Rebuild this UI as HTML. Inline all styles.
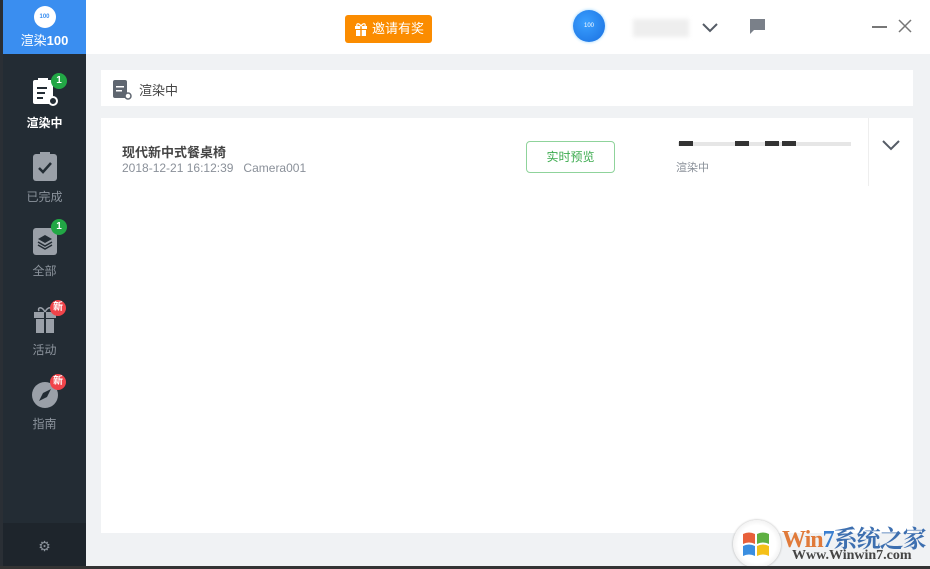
<!DOCTYPE html>
<html><head><meta charset="utf-8"><style>
*{margin:0;padding:0;box-sizing:border-box}
body{width:930px;height:569px;overflow:hidden;background:#f0f2f4;font-family:"Liberation Sans","Noto Sans CJK SC",sans-serif;position:relative}
.abs{position:absolute}
.side{left:0;top:0;width:86px;height:569px;background:#232c34;border-left:3px solid #2a2f35}
.logo{left:3px;top:0;width:83px;height:54px;background:#3a8ef0;color:#fff;text-align:center}
.nav{left:3px;width:83px;text-align:center;font-size:12px;color:#8b939c}
.badge{position:absolute;width:16px;height:16px;border-radius:50%;color:#fff;font-size:10px;line-height:16px;text-align:center;font-weight:bold}
.g{background:#22a745}.r{background:#f0444a}
</style></head><body>
<div class="abs side"></div>
<div class="abs logo">
 <div style="width:22px;height:22px;border-radius:50%;background:#fff;margin:6px auto 0;font-size:6px;color:#3a8ef0;line-height:22px;font-weight:bold">100</div>
 <div style="font-size:13px;margin-top:2px">渲染<b>100</b></div>
</div>
<div class="abs nav" style="top:76px;color:#fff;font-weight:bold">
 <svg width="30" height="32" viewBox="0 0 30 32" style="display:block;margin:0 auto"><rect x="3" y="4" width="20" height="24" rx="2" fill="#fff"/><rect x="8" y="2" width="10" height="4" fill="#fff"/><rect x="7" y="11" width="10" height="2" fill="#232c34"/><rect x="7" y="16" width="8" height="2" fill="#232c34"/><rect x="7" y="21" width="6" height="2" fill="#232c34"/><circle cx="23" cy="25" r="4" fill="#232c34" stroke="#fff" stroke-width="2"/></svg>
 <div style="margin-top:6px">渲染中</div>
 <div class="badge g" style="left:48px;top:-3px">1</div>
</div>
<div class="abs nav" style="top:151px">
 <svg width="30" height="32" viewBox="0 0 30 32" style="display:block;margin:0 auto"><rect x="3" y="3" width="24" height="27" rx="3" fill="#9aa0a8"/><rect x="10" y="1" width="10" height="4" fill="#9aa0a8"/><path d="M9 17l4 4 8-9" stroke="#232c34" stroke-width="2.5" fill="none"/></svg>
 <div style="margin-top:5px">已完成</div>
</div>
<div class="abs nav" style="top:225px">
 <svg width="30" height="32" viewBox="0 0 30 32" style="display:block;margin:0 auto"><rect x="3" y="3" width="24" height="27" rx="3" fill="#9aa0a8"/><path d="M8 14l7-4 7 4-7 4z" fill="#232c34"/><path d="M8 17l7 4 7-4M8 20l7 4 7-4" stroke="#232c34" stroke-width="1.5" fill="none"/></svg>
 <div style="margin-top:5px">全部</div>
 <div class="badge g" style="left:48px;top:-6px">1</div>
</div>
<div class="abs nav" style="top:304px">
 <svg width="30" height="32" viewBox="0 0 30 32" style="display:block;margin:0 auto"><rect x="4" y="8" width="22" height="6" fill="#9aa0a8"/><rect x="6" y="15" width="18" height="14" fill="#9aa0a8"/><rect x="14" y="8" width="2" height="21" fill="#232c34"/><path d="M15 8c-3-6-8-5-6-1M15 8c3-6 8-5 6-1" stroke="#9aa0a8" stroke-width="1.5" fill="none"/></svg>
 <div style="margin-top:5px">活动</div>
 <div class="badge r" style="left:47px;top:-4px">新</div>
</div>
<div class="abs nav" style="top:380px">
 <svg width="30" height="30" viewBox="0 0 30 30" style="display:block;margin:0 auto"><circle cx="15" cy="15" r="13" fill="#9aa0a8"/><path d="M21 9l-4 8-8 4 4-8z" fill="#232c34"/></svg>
 <div style="margin-top:5px">指南</div>
 <div class="badge r" style="left:47px;top:-6px">新</div>
</div>
<div class="abs" style="left:3px;top:523px;width:83px;height:46px;background:#1e252c;color:#8b939c;text-align:center;line-height:46px;font-size:14px">⚙</div>
<div class="abs" style="left:86px;top:0;width:844px;height:54px;background:#fff"></div>
<div class="abs" style="left:345px;top:15px;width:87px;height:28px;background:#fb8c00;border-radius:3px;color:#fff;font-size:13px;line-height:28px;padding-left:27px">邀请有奖</div>
<svg class="abs" style="left:354px;top:22px" width="14" height="14" viewBox="0 0 14 14"><rect x="1" y="4" width="12" height="3" fill="#fff"/><rect x="2" y="8" width="10" height="6" fill="#fff"/><rect x="6.3" y="4" width="1.4" height="10" fill="#fb8c00"/><path d="M7 4c-2-3-5-3-4 0M7 4c2-3 5-3 4 0" stroke="#fff" stroke-width="1.2" fill="none"/></svg>
<div class="abs" style="left:573px;top:10px;width:32px;height:32px;border-radius:50%;background:radial-gradient(circle at 40% 40%,#3aa0ff,#1a6fe0);color:#fff;font-size:6px;text-align:center;line-height:32px;box-shadow:0 0 3px #8fd0ff">100</div>
<div class="abs" style="left:633px;top:19px;width:56px;height:18px;background:#eeeeee;filter:blur(2px)"></div>
<svg class="abs" style="left:701px;top:20px" width="18" height="14"><path d="M2 4l7 7 7-7" stroke="#555c66" stroke-width="2" fill="none"/></svg>
<svg class="abs" style="left:749px;top:18px" width="18" height="18"><path d="M1 1h15v11h-11l-4 4z" fill="#7a8089"/></svg>
<div class="abs" style="left:872px;top:26px;width:15px;height:1.5px;background:#777"></div>
<svg class="abs" style="left:897px;top:18px" width="16" height="16"><path d="M2 2l12 12M14 2l-12 12" stroke="#777" stroke-width="1.5"/></svg>
<div class="abs" style="left:101px;top:70px;width:812px;height:36px;background:#fff"></div>
<svg class="abs" style="left:111px;top:78px" width="22" height="22" viewBox="0 0 22 22"><rect x="2" y="2" width="14" height="18" rx="2" fill="#5f6670"/><rect x="5" y="8" width="8" height="1.5" fill="#fff"/><rect x="5" y="12" width="6" height="1.5" fill="#fff"/><circle cx="17" cy="18" r="3" fill="#fff" stroke="#5f6670" stroke-width="1.5"/></svg>
<div class="abs" style="left:139px;top:80px;font-size:13px;color:#444">渲染中</div>
<div class="abs" style="left:101px;top:118px;width:812px;height:415px;background:#fff"></div>
<div class="abs" style="left:122px;top:142px;font-size:13px;color:#444;font-weight:bold">现代新中式餐桌椅</div>
<div class="abs" style="left:122px;top:161px;font-size:12px;color:#8a9099">2018-12-21 16:12:39&nbsp;&nbsp;&nbsp;Camera001</div>
<div class="abs" style="left:526px;top:141px;width:89px;height:32px;border:1px solid #8fd39b;border-radius:4px;color:#3cab4f;font-size:12px;text-align:center;line-height:30px">实时预览</div>
<div class="abs" style="left:678px;top:142px;width:173px;height:4px;background:#e6e6e6"></div>
<div class="abs" style="left:679px;top:141px;width:14px;height:5px;background:#333"></div>
<div class="abs" style="left:735px;top:141px;width:14px;height:5px;background:#333"></div>
<div class="abs" style="left:765px;top:141px;width:14px;height:5px;background:#333"></div>
<div class="abs" style="left:782px;top:141px;width:14px;height:5px;background:#333"></div>
<div class="abs" style="left:676px;top:159px;font-size:11px;color:#8a9099">渲染中</div>
<div class="abs" style="left:868px;top:118px;width:1px;height:68px;background:#eee"></div>
<svg class="abs" style="left:881px;top:138px" width="20" height="14"><path d="M2 3l8 8 8-8" stroke="#555c66" stroke-width="2" fill="none"/></svg>
<div class="abs" style="left:733px;top:520px;width:48px;height:48px;border-radius:50%;background:radial-gradient(circle,#fff 55%,#ddd);box-shadow:0 0 2px #aaa"></div>
<svg class="abs" style="left:740px;top:528px" width="34" height="32" viewBox="0 0 34 32"><path d="M3 6q6-3 12 0v10q-6-3-12 0z" fill="#e8603a"/><path d="M17 6q6-3 12 0v10q-6-3-12 0z" fill="#5fb042"/><path d="M3 18q6-3 12 0v10q-6-3-12 0z" fill="#3a8ee0"/><path d="M17 18q6-3 12 0v10q-6-3-12 0z" fill="#f5c018"/></svg>
<div class="abs" style="left:782px;top:519px;font-size:24px;font-weight:bold;font-family:'Liberation Serif','Noto Serif CJK SC',serif;color:#e07a3a;letter-spacing:-1px">Win<span style="color:#3a7fd0">7</span><span style="color:#3d6fb0">系统之家</span></div>
<div class="abs" style="left:792px;top:548px;font-size:14px;font-weight:bold;font-family:'Liberation Serif',serif;color:#444">Www.Winwin7.com</div>
<div class="abs" style="left:0;top:566px;width:930px;height:3px;background:#333"></div>
</body></html>
